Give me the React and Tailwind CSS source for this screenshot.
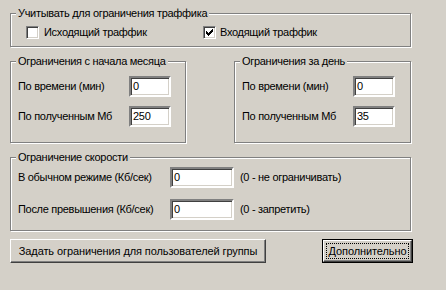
import React from "react";

const font = { fontFamily: '"Liberation Sans", Arial, sans-serif' };

function Group({ label, className, children }) {
  return (
    <div
      className={`relative box-border border border-[#808080] shadow-[inset_1px_1px_0_#ffffff,1px_1px_0_#ffffff] ${className}`}
    >
      <span className="absolute left-[5px] top-[-8px] bg-[#d4d0c8] px-[2px] text-[11px] leading-[14px] text-black whitespace-nowrap">
        {label}
      </span>
      {children}
    </div>
  );
}

function Field({ value, w }) {
  return (
    <div
      className={`${w} h-[21px] box-border border-2 border-t-[#808080] border-l-[#808080] border-b-white border-r-white shadow-[inset_1px_1px_0_#404040,inset_-1px_-1px_0_#d4d0c8] bg-white pl-[2px] pt-[2px] text-[11px] leading-[13px] text-black`}
    >
      {value}
    </div>
  );
}

function Check({ checked }) {
  return (
    <div className="w-[13px] h-[13px] shrink-0 box-border border border-t-[#808080] border-l-[#808080] border-b-white border-r-white shadow-[inset_1px_1px_0_#404040,inset_-1px_-1px_0_#d4d0c8] bg-white flex items-center justify-center">
      {checked && (
        <svg width="7" height="7" viewBox="0 0 7 7" shapeRendering="crispEdges">
          <rect x="6" y="0" width="1" height="1" fill="#000" />
          <rect x="5" y="1" width="2" height="1" fill="#000" />
          <rect x="0" y="2" width="1" height="1" fill="#000" />
          <rect x="4" y="2" width="3" height="1" fill="#000" />
          <rect x="0" y="3" width="2" height="1" fill="#000" />
          <rect x="3" y="3" width="3" height="1" fill="#000" />
          <rect x="0" y="4" width="5" height="1" fill="#000" />
          <rect x="1" y="5" width="3" height="1" fill="#000" />
          <rect x="2" y="6" width="1" height="1" fill="#000" />
        </svg>
      )}
    </div>
  );
}

function LimitGroup({ label, className, a, b }) {
  return (
    <Group label={label} className={`h-[82px] ${className}`}>
      <div className="grid grid-cols-[111px_42px] gap-y-[9px] pl-[7px] pt-[14px] items-center text-[11px] leading-[13px] text-black">
        <span>По времени (мин)</span>
        <Field value={a} w="w-[42px]" />
        <span>По полученным Мб</span>
        <Field value={b} w="w-[42px]" />
      </div>
    </Group>
  );
}

export default function App() {
  return (
    <div
      className="w-[446px] h-[290px] bg-[#d4d0c8] pt-[13px] pl-[10px] flex flex-col text-[11px] tracking-[-0.3px] text-black overflow-hidden"
      style={font}
    >
      <Group label="Учитывать для ограничения траффика" className="w-[401px] h-[34px]">
        <div className="flex items-center pt-[12px] pl-[15px]">
          <div className="w-[177px] flex items-center">
            <Check checked={false} />
            <span className="ml-[5px] leading-[13px]">Исходящий траффик</span>
          </div>
          <div className="flex items-center">
            <Check checked={true} />
            <span className="ml-[4px] leading-[13px]">Входящий траффик</span>
          </div>
        </div>
      </Group>

      <div className="flex mt-[14px] gap-[48px]">
        <LimitGroup label="Ограничения с начала месяца" className="w-[176px]" a="0" b="250" />
        <LimitGroup label="Ограничения за день" className="w-[177px]" a="0" b="35" />
      </div>

      <Group label="Ограничение скорости" className="w-[401px] h-[74px] mt-[14px]">
        <div className="grid grid-cols-[152px_64px_auto] gap-y-[11px] pl-[7px] pt-[9px] items-center leading-[13px]">
          <span>В обычном режиме (Кб/сек)</span>
          <Field value="0" w="w-[64px]" />
          <span className="ml-[6px]">(0 - не ограничивать)</span>
          <span>После превышения (Кб/сек)</span>
          <Field value="0" w="w-[64px]" />
          <span className="ml-[6px]">(0 - запретить)</span>
        </div>
      </Group>

      <div className="flex mt-[8px]">
        <button className="w-[256px] h-[24px] box-border border border-t-white border-l-white border-b-[#404040] border-r-[#404040] shadow-[inset_-1px_-1px_0_#808080] bg-[#d4d0c8] text-[11px] tracking-[-0.1px] leading-[13px] text-black flex items-center justify-center">
          Задать ограничения для пользователей группы
        </button>
        <button className="ml-[56px] w-[91px] h-[24px] box-border border border-black bg-[#d4d0c8] p-0">
          <div className="w-full h-full box-border border border-t-white border-l-white border-b-[#404040] border-r-[#404040] shadow-[inset_-1px_-1px_0_#808080] p-[2px]">
            <div className="w-full h-full box-border border border-dotted border-black flex items-center justify-center text-[11px] tracking-[-0.1px] leading-[13px] text-black">
              Дополнительно
            </div>
          </div>
        </button>
      </div>
    </div>
  );
}
